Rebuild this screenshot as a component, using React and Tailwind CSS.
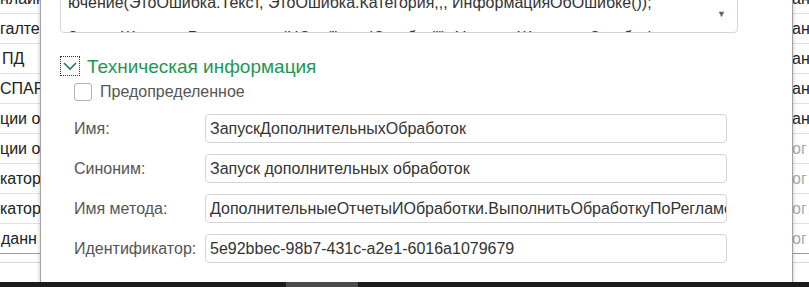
import React from "react";

const rows = [
	{ left: "нлайн", right: "ан", pl: "pl-0", dim: false },
	{ left: "галте", right: "ан", pl: "pl-0", dim: false },
	{ left: "ПД", right: "ан", pl: "pl-[2px]", dim: false },
	{ left: "СПАР", right: "ан", pl: "pl-0", dim: false },
	{ left: "ции о", right: "ан", pl: "pl-0", dim: false },
	{ left: "ции о", right: "ог", pl: "pl-0", dim: true },
	{ left: "катор", right: "ог", pl: "pl-0", dim: true },
	{ left: "катор", right: "ог", pl: "pl-0", dim: true },
	{ left: "данн", right: "ог", pl: "pl-[1px]", dim: true },
];

const fields = [
	{ label: "Имя:", value: "ЗапускДополнительныхОбработок" },
	{ label: "Синоним:", value: "Запуск дополнительных обработок" },
	{ label: "Имя метода:", value: "ДополнительныеОтчетыИОбработки.ВыполнитьОбработкуПоРегламентномуЗаданию" },
	{ label: "Идентификатор:", value: "5e92bbec-98b7-431c-a2e1-6016a1079679" },
];

function BackgroundList() {
	return (
		<div className="flex flex-col mt-[-16px]">
			{rows.map((r, i) => (
				<div
					key={i}
					className={`h-[30px] flex items-center justify-between border-b ${
						i === rows.length - 1 ? "border-[#9c9c9c]" : "border-[#e2e2e2]"
					}`}
				>
					<span className={`${r.pl} text-[16px] text-[#222] whitespace-nowrap`}>{r.left}</span>
					<span className={`w-[17px] text-[16px] whitespace-nowrap overflow-hidden ${r.dim ? "text-[#a8a8a8]" : "text-[#222]"}`}>
						{r.right}
					</span>
				</div>
			))}
			<div className="h-[9px] border-b border-[#d8d8d8]" />
		</div>
	);
}

export default function App() {
	return (
		<div className="w-[809px] h-[287px] overflow-hidden bg-white flex flex-col font-['Liberation_Sans',Arial,sans-serif]">
			<div className="relative h-[282px] overflow-hidden">
				<BackgroundList />

				{/* dialog over the list */}
				<div className="absolute left-[40px] top-0 w-[753px] h-[282px] bg-white border-x border-[#a3a3a3] shadow-[0_0_4px_rgba(0,0,0,0.25)] flex flex-col">
					{/* text area, scrolled */}
					<div className="ml-[19px] w-[678px] mt-[-24px] h-[57px] border border-[#d5d5d5] rounded-[4px] flex overflow-hidden">
						<div className="flex-1 overflow-hidden pl-[7px] pt-[17px] text-[16px] text-[#333] whitespace-nowrap">
							<div className="h-[18px] leading-[18px]">ючение(ЭтоОшибка.Текст, ЭтоОшибка.Категория,,, ИнформацияОбОшибке());</div>
							<div className="h-[18px] leading-[18px] mt-[17px]">ЗаписьЖурналаРегистрации(НСтр("ru = 'Ошибка'"), УровеньЖурнала.Ошибка);</div>
						</div>
						<div className="w-[20px] pt-[33px] text-[9px] leading-none text-[#666]">▼</div>
					</div>

					{/* section header */}
					<div className="flex items-center mt-[23px] ml-[19px]">
						<div className="w-[20px] h-[20px] border border-dotted border-[#333] flex items-center justify-center">
							<svg width="16" height="16" viewBox="0 0 16 16">
								<path d="M2 5 L8 11 L14 5" fill="none" stroke="#2c7a5e" strokeWidth="1.6" />
							</svg>
						</div>
						<span className="ml-[7px] text-[19px] leading-none text-[#1f9652]">Техническая информация</span>
					</div>

					{/* checkbox */}
					<div className="flex items-center mt-[7px] ml-[33px]">
						<div className="w-[18px] h-[18px] border border-[#b5b5b5] rounded-[3px] bg-white" />
						<span className="ml-[8px] text-[16px] leading-none text-[#555]">Предопределенное</span>
					</div>

					{/* fields */}
					<div className="flex flex-col gap-[11px] mt-[13px] ml-[33px]">
						{fields.map((f) => (
							<div key={f.label} className="flex items-center">
								<span className="w-[131px] text-[16px] text-[#555] whitespace-nowrap">{f.label}</span>
								<div className="w-[522px] h-[29px] border border-[#d5d5d5] rounded-[4px] flex items-center pl-[4px] overflow-hidden">
									<span className="text-[16px] text-[#333] whitespace-nowrap">{f.value}</span>
								</div>
							</div>
						))}
					</div>
				</div>
			</div>

			{/* dark strip at the bottom */}
			<div className="h-[5px] bg-[#1d1b1a] flex">
				<div className="ml-[286px] w-[72px] bg-[#4c4946]" />
			</div>
		</div>
	);
}
